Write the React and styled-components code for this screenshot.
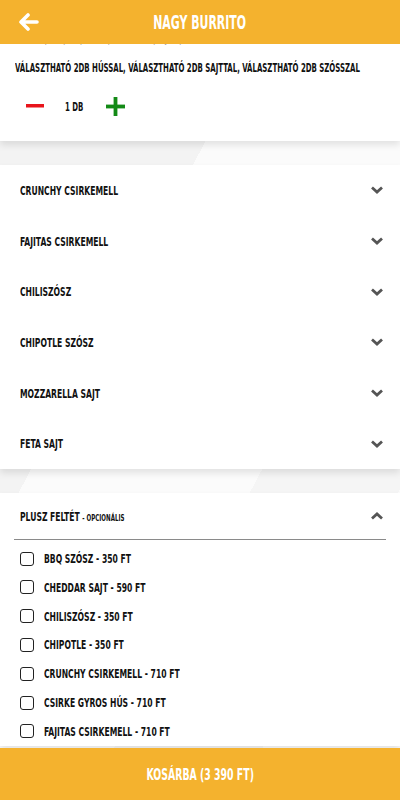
import React, { useState } from "react";
import styled, { createGlobalStyle } from "styled-components";

const GlobalStyle = createGlobalStyle`
  html, body {
    margin: 0;
    padding: 0;
  }
  body {
    width: 400px;
    height: 800px;
    overflow: hidden;
    font-family: "DejaVu Sans Condensed", "DejaVu Sans", sans-serif;
    font-stretch: condensed;
  }
`;

const YELLOW = "#f4b22e";

// the design uses a tall narrow display face; squeeze the condensed face to match
let Squeeze = styled.span`
  display: inline-block;
  white-space: nowrap;
  transform: scaleX(${props => props.sx || 0.68});
  transform-origin: ${props => (props.center ? "center" : "left center")};
`;

let Page = styled.div`
  width: 400px;
  height: 800px;
  display: flex;
  flex-direction: column;
  background-color: #fbfbfb;
  background-image: linear-gradient(
    118deg,
    transparent 0 8%,
    #f3f3f3 8% 34%,
    transparent 34% 62%,
    #f5f5f5 62% 80%,
    transparent 80%
  );
`;

let Header = styled.header`
  height: 44px;
  flex: none;
  background: ${YELLOW};
  display: grid;
  grid-template-columns: 56px 1fr 56px;
  align-items: center;
  position: relative;
  z-index: 2;
`;

let BackButton = styled.button`
  border: 0;
  background: none;
  padding: 0 0 0 19px;
  height: 44px;
  display: flex;
  align-items: center;
  cursor: pointer;
`;

let Title = styled.h1`
  margin: 0;
  text-align: center;
  color: #fff;
  font-size: 19px;
  line-height: 22px;
  font-weight: 700;
`;

let Scroller = styled.main`
  flex: 1;
  overflow: hidden;
`;

let Content = styled.div`
  margin-top: -14px;
  display: flex;
  flex-direction: column;
  gap: 24px;
`;

let Card = styled.section`
  background: #fff;
  box-shadow: 0 4px 7px rgba(0, 0, 0, 0.1);
  padding: ${props => props.pad || "0"};
`;

let Desc = styled.p`
  margin: 0;
  line-height: 20px;
  font-size: 10px;
  font-weight: 700;
  color: #9a9a9a;
  padding-left: 15px;
`;

let Lead = styled.p`
  margin: 10px 0 0;
  padding-left: 15px;
  line-height: 16px;
  font-size: 12.5px;
  font-weight: 700;
  color: #111;
`;

let QtyRow = styled.div`
  margin-top: 15px;
  height: 30px;
  display: flex;
  align-items: center;
  padding-left: 24px;
`;

let QtyButton = styled.button`
  border: 0;
  background: none;
  padding: 0;
  width: 22px;
  height: 22px;
  display: flex;
  align-items: center;
  justify-content: center;
  cursor: pointer;
`;

let QtyText = styled.span`
  width: 58px;
  padding-left: 19px;
  box-sizing: border-box;
  font-size: 12.5px;
  font-weight: 700;
  color: #111;
`;

let Row = styled.div`
  height: ${props => props.h || 50.7}px;
  display: flex;
  align-items: center;
  justify-content: space-between;
  padding: 0 16px 0 20px;
`;

let RowLabel = styled.span`
  font-size: 12.5px;
  font-weight: 700;
  color: #111;
`;

let Small = styled.span`
  font-size: 9px;
`;

let Divider = styled.hr`
  margin: 0 14px;
  border: 0;
  border-top: 1px solid #8a8a8a;
`;

let Options = styled.div`
  padding-top: 4px;
`;

let Option = styled.label`
  height: 28.8px;
  display: flex;
  align-items: center;
  gap: 10px;
  padding-left: 20px;
  cursor: pointer;
`;

let Box = styled.span`
  flex: none;
  width: 12px;
  height: 12px;
  border: 1.5px solid #222;
  border-radius: 3px;
  background: ${props => (props.checked ? "#222" : "#fff")};
`;

let Footer = styled.button`
  height: 52px;
  flex: none;
  border: 0;
  background: ${YELLOW};
  color: #fff;
  font-family: inherit;
  font-stretch: condensed;
  font-size: 16.5px;
  font-weight: 700;
  position: relative;
  z-index: 2;
  cursor: pointer;
`;

function Chevron({ up }) {
  return (
    <svg width="14" height="10" viewBox="0 0 14 10">
      <polyline
        points={up ? "2,7.5 7,3 12,7.5" : "2,2.5 7,7 12,2.5"}
        fill="none"
        stroke="#555"
        strokeWidth="2.8"
      />
    </svg>
  );
}

const fillings = [
  "Crunchy csirkemell",
  "Fajitas csirkemell",
  "Chiliszósz",
  "Chipotle szósz",
  "Mozzarella sajt",
  "Feta sajt"
];

const extras = [
  "BBQ szósz - 350 Ft",
  "Cheddar sajt - 590 Ft",
  "Chiliszósz - 350 Ft",
  "Chipotle - 350 Ft",
  "Crunchy csirkemell - 710 Ft",
  "Csirke gyros hús - 710 Ft",
  "Fajitas csirkemell - 710 Ft"
];

function App() {
  let [qty, changingQty] = useState(1);
  let [checked, changingChecked] = useState([]);

  function toggle(i) {
    changingChecked(
      checked.includes(i) ? checked.filter(c => c !== i) : [...checked, i]
    );
  }

  return (
    <Page>
      <GlobalStyle />
      <Header>
        <BackButton aria-label="vissza">
          <svg width="20" height="18" viewBox="0 0 20 18">
            <path
              d="M9 2 L2 9 L9 16 M2.5 9 H18"
              fill="none"
              stroke="#fff"
              strokeWidth="3.6"
              strokeLinecap="round"
              strokeLinejoin="round"
            />
          </svg>
        </BackButton>
        <Title>
          <Squeeze center sx={0.64}>NAGY BURRITO</Squeeze>
        </Title>
        <span />
      </Header>

      <Scroller>
        <Content>
          <Card pad="0 0 20px">
            <Desc>
              <Squeeze sx={0.62}>
                TORTILLA, RIZS, BAB, SALÁTA, PARADICSOM, TEJFÖL, KUKORICA
              </Squeeze>
            </Desc>
            <Lead>
              <Squeeze sx={0.62}>
                VÁLASZTHATÓ 2DB HÚSSAL, VÁLASZTHATÓ 2DB SAJTTAL, VÁLASZTHATÓ 2DB
                SZÓSSZAL
              </Squeeze>
            </Lead>
            <QtyRow>
              <QtyButton onClick={() => changingQty(Math.max(1, qty - 1))}>
                <svg width="18" height="4" viewBox="0 0 18 4">
                  <rect width="18" height="3.5" fill="#e8141b" />
                </svg>
              </QtyButton>
              <QtyText>
                <Squeeze sx={0.62}>{qty} DB</Squeeze>
              </QtyText>
              <QtyButton onClick={() => changingQty(qty + 1)}>
                <svg width="19" height="19" viewBox="0 0 19 19">
                  <rect x="7.6" width="3.8" height="19" fill="#138a16" />
                  <rect y="7.6" width="19" height="3.8" fill="#138a16" />
                </svg>
              </QtyButton>
            </QtyRow>
          </Card>

          <Card>
            {fillings.map(name => (
              <Row key={name}>
                <RowLabel>
                  <Squeeze>{name.toUpperCase()}</Squeeze>
                </RowLabel>
                <Chevron />
              </Row>
            ))}
          </Card>

          <Card>
            <Row h={46}>
              <RowLabel>
                <Squeeze>
                  PLUSZ FELTÉT <Small>- OPCIONÁLIS</Small>
                </Squeeze>
              </RowLabel>
              <Chevron up />
            </Row>
            <Divider />
            <Options>
              {extras.map((name, i) => (
                <Option key={name} onClick={() => toggle(i)}>
                  <Box checked={checked.includes(i)} />
                  <RowLabel>
                    <Squeeze>{name.toUpperCase()}</Squeeze>
                  </RowLabel>
                </Option>
              ))}
            </Options>
          </Card>
        </Content>
      </Scroller>

      <Footer>
        <Squeeze center sx={0.63}>
          KOSÁRBA (3 390 FT)
        </Squeeze>
      </Footer>
    </Page>
  );
}

export default App;
